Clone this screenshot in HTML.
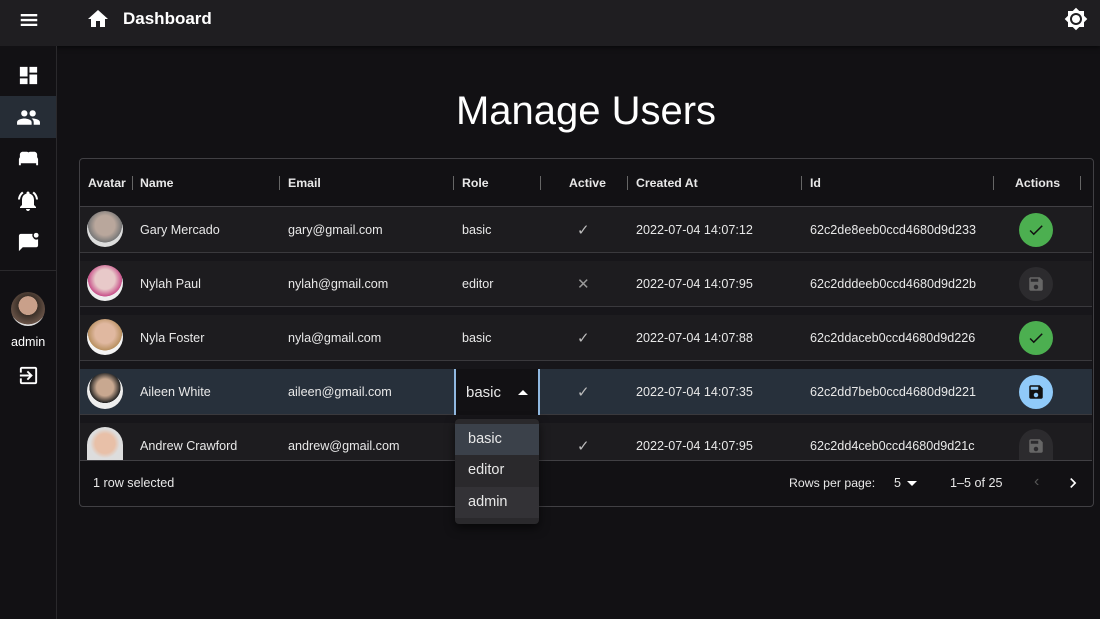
<!DOCTYPE html>
<html><head><style>
*{margin:0;padding:0;box-sizing:border-box}
body{width:1100px;height:619px;background:#121114;font-family:"Liberation Sans",sans-serif;color:#e8e8e8;position:relative;overflow:hidden}
.a{position:absolute}
.top{left:0;top:0;width:1100px;height:46px;background:#1f1e21;box-shadow:0 2px 4px rgba(0,0,0,.5)}
.side{left:0;top:46px;width:57px;height:573px;border-right:1px solid #2a292c;background:#121114}
.t{font-size:12.6px;white-space:nowrap}
.row{left:80px;width:1012px;height:46px;background:#1d1c1f}
.gap{left:80px;width:1012px;height:8px;background:#17161a}
.sep{width:1px;height:14px;background:#666;top:176px}
.av{width:36px;height:36px;border-radius:50%;left:87px}
.btn{width:34px;height:34px;border-radius:50%;left:1019px;display:flex;align-items:center;justify-content:center}
.h{font-size:12.3px;font-weight:bold;top:176px}
.ck{font-size:15px;color:#bbb}
</style></head><body>
<div class="a top"></div>
<svg class="a" style="left:18px;top:9px" width="22" height="22" viewBox="0 0 24 24"><path fill="#fff" d="M3 5.5h18v2.5H3zm0 5.3h18v2.5H3zm0 5.3h18v2.5H3z"/></svg>
<svg class="a" style="left:86px;top:7px" width="24" height="24" viewBox="0 0 24 24"><path fill="#fff" d="M10 20v-6h4v6h5v-8h3L12 3 2 12h3v8z"/></svg>
<div class="a" style="left:123px;top:9px;font-size:17px;font-weight:bold;color:#fff">Dashboard</div>
<svg class="a" style="left:1064px;top:7px" width="24" height="24" viewBox="0 0 24 24"><path fill="#fff" d="M20 8.69V4h-4.69L12 .69 8.69 4H4v4.69L.69 12 4 15.31V20h4.69L12 23.31 15.31 20H20v-4.69L23.31 12 20 8.69zM12 18c-3.31 0-6-2.69-6-6s2.69-6 6-6 6 2.69 6 6-2.69 6-6 6zm0-10c-2.21 0-4 1.79-4 4s1.79 4 4 4 4-1.79 4-4-1.79-4-4-4z"/></svg>
<div class="a side"></div>
<div class="a" style="left:0;top:96px;width:56px;height:42px;background:#262d36"></div>
<div class="a" style="left:0;top:270px;width:56px;height:1px;background:#2a292c"></div>
<svg class="a" style="left:17px;top:64px" width="23" height="23" viewBox="0 0 24 24"><path fill="#fff" d="M3 13h8V3H3v10zm0 8h8v-6H3v6zm10 0h8V11h-8v10zm0-18v6h8V3h-8z"/></svg>
<svg class="a" style="left:16px;top:105px" width="25" height="25" viewBox="0 0 24 24"><path fill="#fff" d="M16 11c1.66 0 2.99-1.34 2.99-3S17.66 5 16 5c-1.66 0-3 1.34-3 3s1.34 3 3 3zm-8 0c1.66 0 2.99-1.34 2.99-3S9.66 5 8 5C6.34 5 5 6.34 5 8s1.34 3 3 3zm0 2c-2.33 0-7 1.17-7 3.5V19h14v-2.5c0-2.33-4.67-3.5-7-3.5zm8 0c-.29 0-.62.02-.97.05 1.16.84 1.97 1.97 1.97 3.45V19h6v-2.5c0-2.33-4.67-3.5-7-3.5z"/></svg>
<svg class="a" style="left:17px;top:147px" width="23" height="23" viewBox="0 0 24 24"><path fill="#fff" d="M21 10.78V8c0-1.65-1.35-3-3-3h-4c-.77 0-1.47.3-2 .78-.53-.48-1.23-.78-2-.78H6C4.35 5 3 6.35 3 8v2.78c-.61.55-1 1.34-1 2.22v6h2v-2h16v2h2v-6c0-.88-.39-1.67-1-2.22z"/></svg>
<svg class="a" style="left:16px;top:189px" width="24" height="24" viewBox="0 0 24 24"><path fill="#fff" d="M12 22c1.1 0 2-.9 2-2h-4c0 1.1.89 2 2 2zm6-6v-5c0-3.07-1.64-5.640-4.5-6.32V4c0-.83-.67-1.5-1.5-1.5s-1.5.67-1.5 1.5v.68C7.63 5.36 6 7.92 6 11v5l-2 2v1h16v-1l-2-2zM7.58 4.08 6.15 2.65C3.75 4.48 2.170 7.3 2.03 10.5h2c.15-2.65 1.51-4.97 3.55-6.42zm12.39 6.42h2c-.15-3.2-1.73-6.02-4.12-7.85l-1.42 1.43c2.02 1.45 3.39 3.77 3.54 6.42z"/></svg>
<svg class="a" style="left:17px;top:230px" width="23" height="23" viewBox="0 0 24 24"><path fill="#fff" d="M20 8c1.5 0 2.5-1 2.5-2.5S21.5 3 20 3s-2.5 1-2.5 2.5S18.5 8 20 8zM17 8c-.7-.7-1-1.6-1-2.5 0-.5.1-1 .3-1.5H4c-1.1 0-2 .9-2 2v16l4-4h14c1.1 0 2-.9 2-2V9.6c-.5.3-1.2.4-2 .4-1.2 0-2.3-.5-3-2z"/></svg>
<div class="a" style="left:11px;top:292px;width:34px;height:34px;border-radius:50%;background:radial-gradient(circle at 50% 40%,#c9a08a 35%,#3b3028 36%,#6a5448 70%,#ddd 71%)"></div>
<div class="a t" style="left:11px;top:335px;color:#fff">admin</div>
<svg class="a" style="left:17px;top:364px" width="23" height="23" viewBox="0 0 24 24"><path fill="#fff" d="M10.09 15.59 11.5 17l5-5-5-5-1.41 1.41L12.67 11H3v2h9.67l-2.58 2.59zM19 3H5c-1.11 0-2 .9-2 2v4h2V5h14v14H5v-4H3v4c0 1.1.89 2 2 2h14c1.1 0 2-.9 2-2V5c0-1.1-.9-2-2-2z"/></svg>

<div class="a" style="left:0;top:89px;width:1172px;text-align:center;font-size:40px;color:#fff">Manage Users</div>

<div class="a" style="left:79px;top:158px;width:1015px;height:349px;border:1px solid #414044;border-radius:4px;background:#121114"></div>
<div class="a" style="left:80px;top:206px;width:1012px;height:1px;background:#414044"></div>
<div class="a h" style="left:88px">Avatar</div><div class="a h" style="left:140px">Name</div><div class="a h" style="left:288px">Email</div><div class="a h" style="left:462px">Role</div><div class="a h" style="left:569px">Active</div><div class="a h" style="left:636px">Created At</div><div class="a h" style="left:810px">Id</div><div class="a h" style="left:1015px">Actions</div>
<div class="a sep" style="left:132px"></div><div class="a sep" style="left:279px"></div><div class="a sep" style="left:453px"></div><div class="a sep" style="left:540px"></div><div class="a sep" style="left:627px"></div><div class="a sep" style="left:801px"></div><div class="a sep" style="left:993px"></div><div class="a sep" style="left:1080px"></div>

<div class="a row" style="top:207px"></div><div class="a gap" style="top:253px"></div>
<div class="a row" style="top:261px"></div><div class="a gap" style="top:307px"></div>
<div class="a row" style="top:315px"></div><div class="a gap" style="top:361px"></div>
<div class="a row" style="top:369px;background:#27303b"></div><div class="a gap" style="top:415px"></div>
<div class="a row" style="top:423px;height:37px"></div>
<div class="a" style="left:80px;top:252px;width:1012px;height:1px;background:#3a393d"></div>
<div class="a" style="left:80px;top:306px;width:1012px;height:1px;background:#3a393d"></div>
<div class="a" style="left:80px;top:360px;width:1012px;height:1px;background:#3a393d"></div>
<div class="a" style="left:80px;top:414px;width:1012px;height:1px;background:#3a393d"></div>
<div class="a" style="left:80px;top:460px;width:1012px;height:1px;background:#414044"></div>

<div class="a av" style="top:211px;background:radial-gradient(circle at 50% 40%,#b9a79c 35%,#777 60%,#ddd 61%)"></div>
<div class="a av" style="top:265px;background:radial-gradient(circle at 50% 40%,#e8c9c9 35%,#c8508a 60%,#eee 61%)"></div>
<div class="a av" style="top:319px;background:radial-gradient(circle at 50% 40%,#e0b8a0 35%,#b89060 60%,#f4f4f4 61%)"></div>
<div class="a av" style="top:373px;background:radial-gradient(circle at 50% 40%,#c8a890 30%,#222 55%,#eee 56%)"></div>
<div class="a av" style="top:427px;height:33px;border-radius:18px 18px 0 0;background:radial-gradient(circle at 50% 50%,#e8c0a8 40%,#ddd 60%)"></div>

<div class="a t" style="left:140px;top:223px">Gary Mercado</div><div class="a t" style="left:288px;top:223px">gary@gmail.com</div><div class="a t" style="left:462px;top:223px">basic</div><div class="a ck" style="left:577px;top:221px">✓</div><div class="a t" style="left:636px;top:223px">2022-07-04 14:07:12</div><div class="a t" style="left:810px;top:223px">62c2de8eeb0ccd4680d9d233</div>
<div class="a t" style="left:140px;top:277px">Nylah Paul</div><div class="a t" style="left:288px;top:277px">nylah@gmail.com</div><div class="a t" style="left:462px;top:277px">editor</div><div class="a ck" style="left:577px;top:275px;color:#999">✕</div><div class="a t" style="left:636px;top:277px">2022-07-04 14:07:95</div><div class="a t" style="left:810px;top:277px">62c2dddeeb0ccd4680d9d22b</div>
<div class="a t" style="left:140px;top:331px">Nyla Foster</div><div class="a t" style="left:288px;top:331px">nyla@gmail.com</div><div class="a t" style="left:462px;top:331px">basic</div><div class="a ck" style="left:577px;top:329px">✓</div><div class="a t" style="left:636px;top:331px">2022-07-04 14:07:88</div><div class="a t" style="left:810px;top:331px">62c2ddaceb0ccd4680d9d226</div>
<div class="a t" style="left:140px;top:385px">Aileen White</div><div class="a t" style="left:288px;top:385px">aileen@gmail.com</div><div class="a ck" style="left:577px;top:383px">✓</div><div class="a t" style="left:636px;top:385px">2022-07-04 14:07:35</div><div class="a t" style="left:810px;top:385px">62c2dd7beb0ccd4680d9d221</div>
<div class="a t" style="left:140px;top:439px">Andrew Crawford</div><div class="a t" style="left:288px;top:439px">andrew@gmail.com</div><div class="a ck" style="left:577px;top:437px">✓</div><div class="a t" style="left:636px;top:439px">2022-07-04 14:07:95</div><div class="a t" style="left:810px;top:439px">62c2dd4ceb0ccd4680d9d21c</div>

<div class="a" style="left:454px;top:369px;width:86px;height:46px;background:#121114;border-left:2px solid #90b8e0;border-right:2px solid #90b8e0"></div>
<div class="a" style="left:466px;top:384px;font-size:15px">basic</div>
<div class="a" style="left:518px;top:390px;width:0;height:0;border-left:5px solid transparent;border-right:5px solid transparent;border-bottom:5px solid #fff"></div>

<div class="a btn" style="top:213px;background:#4caf50"><svg width="18" height="18" viewBox="0 0 24 24"><path fill="#111" d="M9 16.17 4.83 12l-1.42 1.41L9 19 21 7l-1.41-1.41z"/></svg></div>
<div class="a btn" style="top:267px;background:#2c2b2e"><svg width="18" height="18" viewBox="0 0 24 24"><path fill="#666" d="M17 3H5c-1.11 0-2 .9-2 2v14c0 1.1.89 2 2 2h14c1.1 0 2-.9 2-2V7l-4-4zm-5 16c-1.66 0-3-1.34-3-3s1.34-3 3-3 3 1.34 3 3-1.34 3-3 3zm3-10H5V5h10v4z"/></svg></div>
<div class="a btn" style="top:321px;background:#4caf50"><svg width="18" height="18" viewBox="0 0 24 24"><path fill="#111" d="M9 16.17 4.83 12l-1.42 1.41L9 19 21 7l-1.41-1.41z"/></svg></div>
<div class="a btn" style="top:375px;background:#90caf9"><svg width="18" height="18" viewBox="0 0 24 24"><path fill="#111" d="M17 3H5c-1.11 0-2 .9-2 2v14c0 1.1.89 2 2 2h14c1.1 0 2-.9 2-2V7l-4-4zm-5 16c-1.66 0-3-1.34-3-3s1.34-3 3-3 3 1.34 3 3-1.34 3-3 3zm3-10H5V5h10v4z"/></svg></div>
<div class="a btn" style="top:429px;height:31px;border-radius:17px 17px 0 0;background:#2c2b2e;align-items:flex-start;padding-top:8px"><svg width="18" height="18" viewBox="0 0 24 24"><path fill="#666" d="M17 3H5c-1.11 0-2 .9-2 2v14c0 1.1.89 2 2 2h14c1.1 0 2-.9 2-2V7l-4-4zm-5 16c-1.66 0-3-1.34-3-3s1.34-3 3-3 3 1.34 3 3-1.34 3-3 3zm3-10H5V5h10v4z"/></svg></div>

<div class="a t" style="left:93px;top:476px">1 row selected</div>
<div class="a t" style="left:789px;top:476px;font-size:12.3px">Rows per page:</div>
<div class="a t" style="left:894px;top:476px">5</div>
<div class="a" style="left:907px;top:481px;border-left:5px solid transparent;border-right:5px solid transparent;border-top:5px solid #fff"></div>
<div class="a t" style="left:950px;top:476px">1–5 of 25</div>
<div class="a t" style="left:1034px;top:473px;color:#555;font-size:16px">‹</div>
<svg class="a" style="left:1063px;top:473px" width="20" height="20" viewBox="0 0 24 24"><path fill="#fff" d="M10 6 8.59 7.41 13.17 12l-4.58 4.59L10 18l6-6z"/></svg>

<div class="a" style="left:455px;top:419px;width:84px;height:105px;background:#2a292c;border-radius:4px;box-shadow:0 4px 10px rgba(0,0,0,.6)"></div>
<div class="a" style="left:455px;top:424px;width:84px;height:31px;background:#3b414a"></div>
<div class="a" style="left:455px;top:487px;width:84px;height:31px;background:#333236"></div>
<div class="a" style="left:468px;top:431px;font-size:14.5px">basic</div>
<div class="a" style="left:468px;top:462px;font-size:14.5px">editor</div>
<div class="a" style="left:468px;top:494px;font-size:14.5px">admin</div>
</body></html>
